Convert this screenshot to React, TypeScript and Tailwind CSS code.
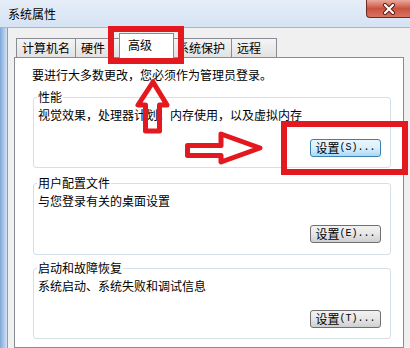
const tabs = [
  { label: "计算机名", w: "w-[60px]", active: false },
  { label: "硬件", w: "w-[47px]", active: false },
  { label: "高级", w: "w-[55px]", active: true },
  { label: "系统保护", w: "w-[61px]", active: false },
  { label: "远程", w: "w-[46px]", active: false },
];

const groups = [
  { title: "性能", desc: "视觉效果，处理器计划，内存使用，以及虚拟内存", key: "S", h: "h-[71px]", mt: "mt-[15px]", hot: true },
  { title: "用户配置文件", desc: "与您登录有关的桌面设置", key: "E", h: "h-[72px]", mt: "mt-[15px]", hot: false },
  { title: "启动和故障恢复", desc: "系统启动、系统失败和调试信息", key: "T", h: "h-[71px]", mt: "mt-[13px]", hot: false },
];

function SettingsButton({ k, hot }: { k: string; hot: boolean }) {
  return (
    <div
      className={
        hot
          ? "flex h-[18px] w-[71px] items-center justify-center rounded-[3px] border border-[#3c7fb1] bg-gradient-to-b from-[#eaf6fd] via-[#d9f0fc] to-[#a7d9f5]"
          : "flex h-[18px] w-[71px] items-center justify-center rounded-[3px] border border-[#707070] bg-gradient-to-b from-[#f2f2f2] via-[#e6e6e6] to-[#cfcfcf]"
      }
    >
      <span className="leading-[14px]">设置</span>
      <span className="font-['Liberation_Mono',monospace] text-[10px] leading-[14px]">({k})...</span>
    </div>
  );
}

export default function App() {
  return (
    <div className="relative h-[348px] w-[410px] overflow-hidden bg-[#f0f0f0] font-['Noto_Sans_CJK_SC',sans-serif] text-[12px] text-black">
      {/* title bar */}
      <div className="flex h-[28px] border-b border-[#aab6c4] bg-gradient-to-b from-[#e6eef8] to-[#d5e3f3]">
        <div className="pl-[8px] pt-[6px] leading-[16px]">系统属性</div>
        <div className="ml-auto flex h-[18px] w-[44px] items-center justify-center rounded-bl-[4px] border border-t-0 border-r-0 border-[#6b2a22] bg-gradient-to-b from-[#e9a99c] via-[#c9523f] to-[#d8735f]">
          <svg width="14" height="12" viewBox="0 0 14 12">
            <path d="M3 2 L11 10 M11 2 L3 10" stroke="#5a1a12" strokeWidth="4" strokeLinecap="round" />
            <path d="M3 2 L11 10 M11 2 L3 10" stroke="#ffffff" strokeWidth="2.2" strokeLinecap="round" />
          </svg>
        </div>
      </div>

      <div className="flex h-[320px]">
        {/* left window frame */}
        <div className="w-[8px] border-r border-[#8d9cad] bg-gradient-to-r from-[#7fa8d8] to-[#d3e3f4]" />

        <div className="flex flex-1 flex-col pl-[6px] pr-[6px]">
          {/* tab strip */}
          <div className="flex h-[29px] items-end pl-[2px]">
            {tabs.map((t, i) =>
              t.active ? (
                <div
                  key={t.label}
                  className={`relative z-10 -mb-px -mr-[2px] -ml-[3px] h-[25px] ${t.w} border border-b-0 border-[#898c95] bg-white pl-[8px] pt-[4px] leading-[14px]`}
                >
                  {t.label}
                </div>
              ) : (
                <div
                  key={t.label}
                  className={`h-[19px] ${t.w} ${i > 0 ? "-ml-px" : ""} border border-b-0 border-[#898c95] bg-gradient-to-b from-[#f4f4f4] to-[#e2e2e2] pl-[5px] pt-[2px] leading-[14px]`}
                >
                  {t.label}
                </div>
              )
            )}
          </div>

          {/* tab panel */}
          <div className="flex-1 border border-[#898c95] bg-white pl-[18px] pr-[12px] pt-[10px]">
            <div className="-ml-px leading-[14px]">要进行大多数更改，您必须作为管理员登录。</div>

            {groups.map((g) => (
              <div
                key={g.title}
                className={`relative ${g.mt} ${g.h} flex flex-col rounded-[3px] border border-[#d5dfe5] pl-[4px] pr-[9px] pt-[10px]`}
              >
                <span className="absolute -top-[8px] left-[3px] bg-white px-px leading-[14px]">{g.title}</span>
                <div className="leading-[14px]">{g.desc}</div>
                <div className="mt-[17px] flex justify-end">
                  <SettingsButton k={g.key} hot={g.hot} />
                </div>
              </div>
            ))}
          </div>
        </div>
      </div>

      {/* red annotations drawn over the screenshot */}
      <svg className="pointer-events-none absolute inset-0" width="410" height="348" viewBox="0 0 410 348">
        <g fill="none" stroke="#e3191f" strokeWidth="6">
          <rect x="111" y="29" width="70" height="32" />
          <rect x="284" y="124" width="121" height="48" />
        </g>
        <g fill="none" stroke="#e3191f" strokeWidth="5" strokeLinejoin="round">
          <polygon points="153,82 138,105 145.5,105 145.5,131 159.5,131 159.5,105 167,105" />
          <polygon points="187.5,145.5 221,145.5 221,134 260,148 221,162 221,155.5 187.5,155.5" />
        </g>
      </svg>
    </div>
  );
}
